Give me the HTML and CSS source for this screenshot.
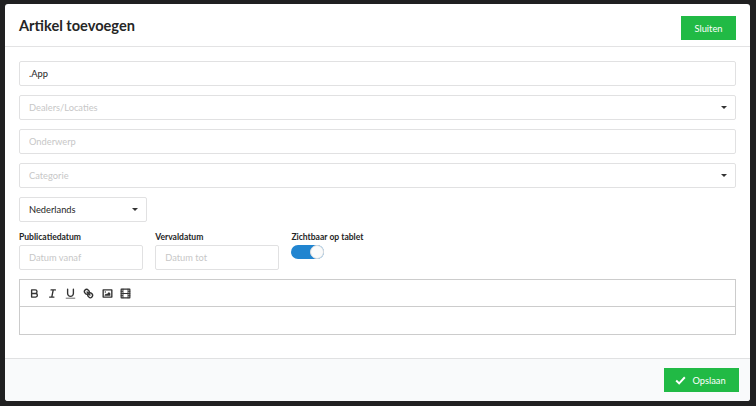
FILE: index.html
```html
<!DOCTYPE html>
<html lang="nl">
<head>
    <meta charset="UTF-8">
    <meta name="viewport" content="width=device-width, initial-scale=1.0">
    <title>Artikel toevoegen</title>
    <link rel="stylesheet" href="styles.css">
</head>
<body>
    <div class="modal">
        <div class="header">
            <h1>Artikel toevoegen</h1>
            <button class="button">Sluiten</button>
        </div>

        <form class="content">
            <input class="field" type="text" value=".App">
            <div class="field dropdown placeholder">Dealers/Locaties <i class="caret"></i></div>
            <input class="field" type="text" placeholder="Onderwerp">
            <div class="field dropdown placeholder">Categorie <i class="caret"></i></div>
            <div class="field dropdown language">Nederlands <i class="caret"></i></div>

            <div class="options">
                <div class="option">
                    <label for="date-from">Publicatiedatum</label>
                    <input class="field" type="text" id="date-from" placeholder="Datum vanaf">
                </div>
                <div class="option">
                    <label for="date-to">Vervaldatum</label>
                    <input class="field" type="text" id="date-to" placeholder="Datum tot">
                </div>
                <div class="option">
                    <label>Zichtbaar op tablet</label>
                    <div class="toggle"><span class="knob"></span></div>
                </div>
            </div>

            <div class="editor">
                <div class="toolbar">
                    <svg viewBox="0 0 18 18">
                        <path d="M5 4h5a2.5 2.5 0 0 1 0 5H5zM5 9h5.5a2.5 2.5 0 0 1 0 5H5z"/>
                    </svg>
                    <svg viewBox="0 0 18 18">
                        <path d="M7 4h6M5 14h6M8 14l2-10"/>
                    </svg>
                    <svg viewBox="0 0 18 18">
                        <path d="M5 3v6a4 4 0 0 0 8 0V3"/>
                        <path class="thin" d="M3 15.5h12"/>
                    </svg>
                    <svg viewBox="0 0 18 18">
                        <path d="M7 7l4 4"/>
                        <path d="M8.9 4.577a3.476 3.476 0 0 1 .36 4.679A3.476 3.476 0 0 1 4.577 8.9C3.185 7.5 2.035 6.4 4.217 4.217S7.5 3.185 8.9 4.577z"/>
                        <path d="M13.423 9.1a3.476 3.476 0 0 0-4.679-.36 3.476 3.476 0 0 0 .356 4.683c1.392 1.392 2.5 2.542 4.679.36s1.036-3.283-.356-4.683z"/>
                    </svg>
                    <svg viewBox="0 0 18 18">
                        <path d="M3 4h12v10H3z"/>
                        <circle class="solid" cx="6" cy="7" r="1"/>
                        <path class="solid" d="M5 12v-1l2-2 1 1 3-3 2 2v3z"/>
                    </svg>
                    <svg viewBox="0 0 18 18">
                        <path class="frame" d="M3 3h12v12H3z"/>
                        <path class="film" d="M5.5 3v12M12.5 3v12M3 6h2M3 9h2M3 12h2M13 6h2M13 9h2M13 12h2"/>
                        <path class="frame" d="M5.5 9h7"/>
                    </svg>
                </div>
                <div class="text" contenteditable="true"></div>
            </div>
        </form>

        <div class="footer">
            <button class="button save">
                <svg class="check" viewBox="0 0 12 10"><path d="M1.2 5l3.3 3.2 6.3-6.8"/></svg>
                Opslaan
            </button>
        </div>
    </div>
</body>
</html>
```
FILE: styles.css
```css
* {
    box-sizing: border-box;
}
body {
    margin: 0;
    height: 406px;
    padding: 4px 5px 5px;
    overflow: hidden;
    background: #202021;
    font-family: Lato, sans-serif;
    font-size: 9.3px;
    color: #262626;
}
.modal {
    display: flex;
    flex-direction: column;
    width: 745px;
    height: 397px;
    overflow: hidden;
    background: #fff;
    border-radius: 3px;
}
.header {
    display: flex;
    justify-content: space-between;
    height: 43px;
    padding: 12px 14px 0;
    border-bottom: 1px solid #e3e3e4;
}
h1 {
    margin: 0;
    font-size: 14.6px;
    line-height: 19px;
    font-weight: 700;
}
.button {
    width: 55px;
    height: 24px;
    padding: 0;
    border: 0;
    background: #21ba45;
    color: #fff;
    font: inherit;
}
.content {
    display: flex;
    flex-direction: column;
    flex: 1;
    gap: 9px;
    padding: 14px 14px 0;
}
.field {
    width: 100%;
    height: 25px;
    padding: 0 9px;
    border: 1px solid #e1e1e2;
    border-radius: 2px;
    background: #fff;
    color: #262626;
    font: inherit;
}
.field::placeholder {
    color: #c7c7c7;
}
.dropdown {
    display: flex;
    align-items: center;
    justify-content: space-between;
    padding-right: 8px;
}
.placeholder {
    color: #c7c7c7;
}
.language {
    width: 128px;
}
.caret {
    border: 3px solid transparent;
    border-top-color: #333;
    border-bottom: 0;
}
.options {
    display: flex;
    gap: 12.5px;
    margin-top: 1px;
}
.option {
    width: 123.7px;
}
label {
    display: block;
    height: 13px;
    line-height: 10px;
    font-size: 8.55px;
    font-weight: 700;
    white-space: nowrap;
}
.toggle {
    display: flex;
    justify-content: flex-end;
    width: 33px;
    height: 14px;
    border-radius: 7px;
    background: #2185d0;
}
.knob {
    width: 14px;
    height: 14px;
    border: 1px solid #dcdcdd;
    border-radius: 50%;
    background: #fbfbfb;
}
.editor {
    height: 56px;
    border: 1px solid #ccc;
}
.toolbar {
    display: flex;
    align-items: center;
    gap: 5.3px;
    height: 27px;
    padding-left: 7.5px;
    border-bottom: 1px solid #ccc;
}
.toolbar svg {
    width: 13px;
    height: 13px;
    fill: none;
    stroke: #333;
    stroke-width: 1.9;
    stroke-linecap: round;
    stroke-linejoin: round;
}
.toolbar .thin {
    stroke-width: 1;
}
.toolbar .film {
    stroke-width: 1.3;
}
.toolbar .frame {
    stroke-width: 1.7;
}
.toolbar .solid {
    fill: #333;
    stroke: none;
}
.text {
    height: 27px;
}
.footer {
    display: flex;
    justify-content: flex-end;
    height: 43px;
    padding: 9px 11px 0;
    border-top: 1px solid #e0e1e2;
    background: #f9fafb;
}
.save {
    display: flex;
    align-items: center;
    justify-content: center;
    gap: 6px;
    width: 75px;
    padding-right: 2px;
}
.check {
    width: 11px;
    height: 9px;
    fill: none;
    stroke: #fff;
    stroke-width: 2.2;
}
```
